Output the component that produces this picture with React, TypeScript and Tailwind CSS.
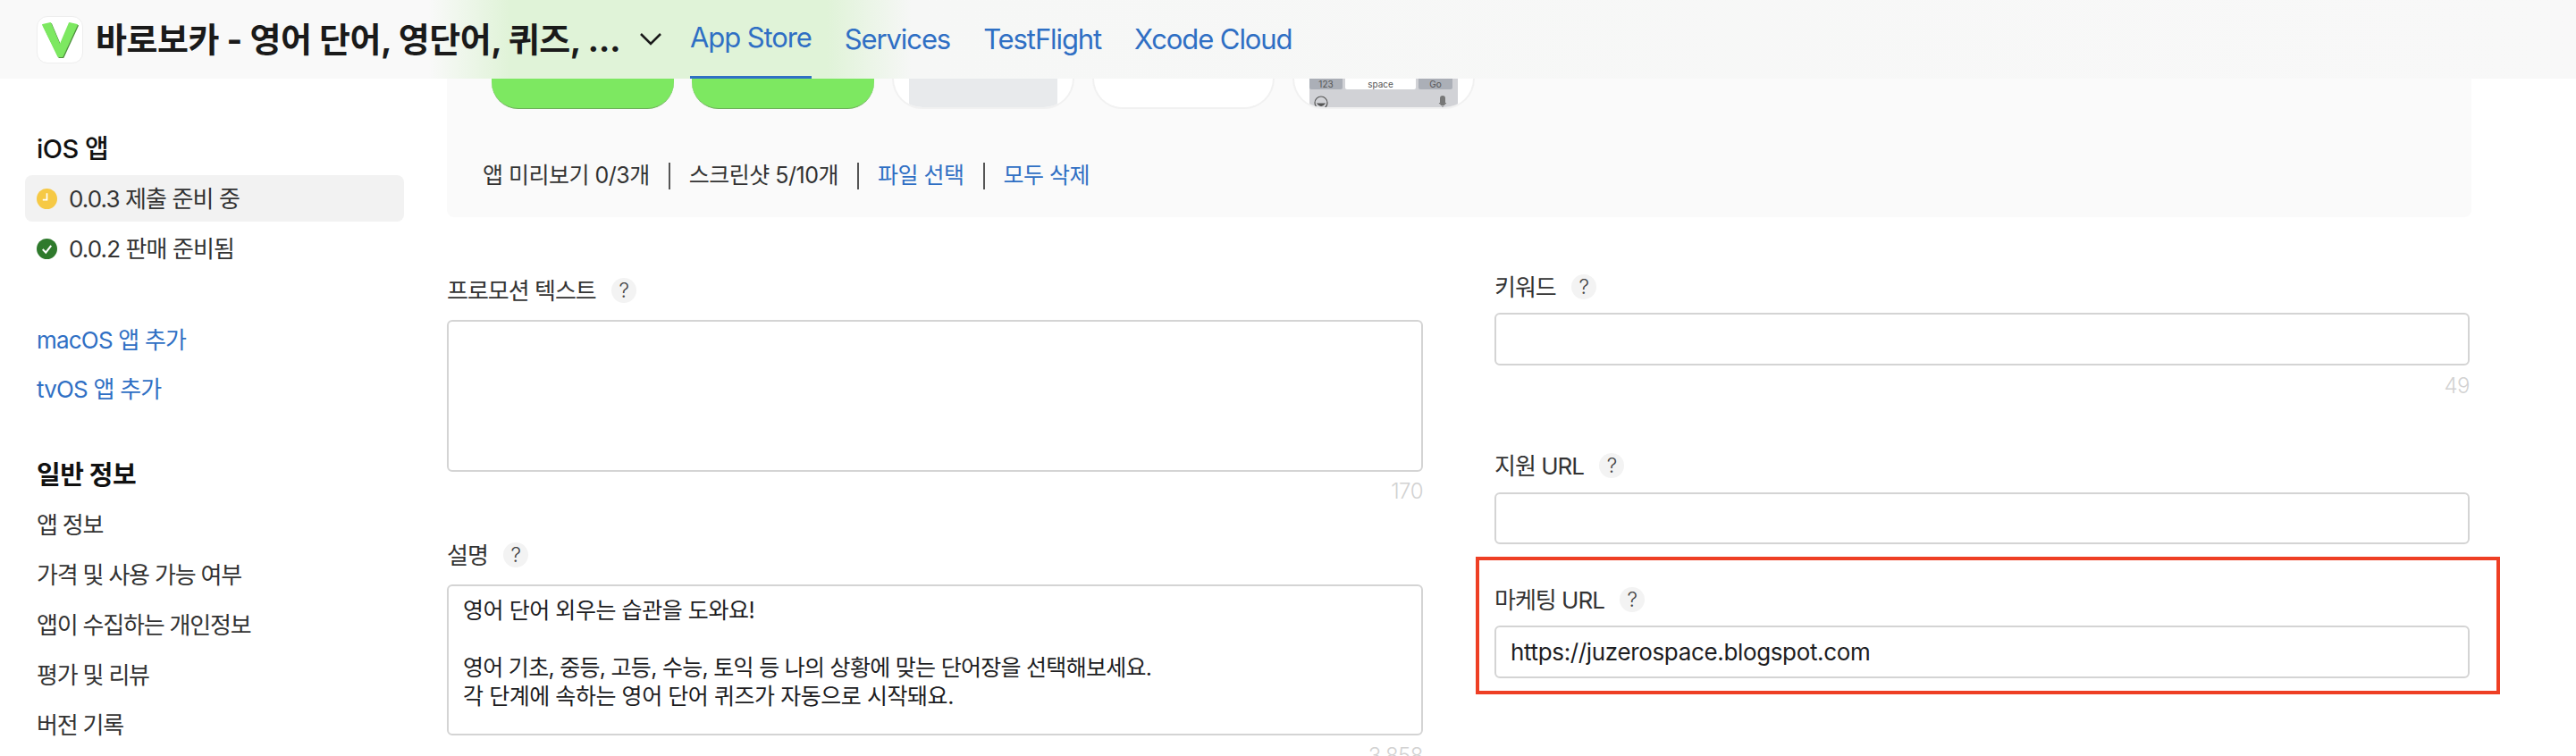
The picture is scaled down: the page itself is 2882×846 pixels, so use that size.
const font = "font-['Inter','Noto_Sans_CJK_KR',sans-serif]";

function Help() {
  return (
    <span className="flex h-[28px] w-[28px] items-center justify-center rounded-full bg-[#f3f3f3] text-[23px] font-light text-[#444]">
      ?
    </span>
  );
}

function FieldLabel({ text }: { text: string }) {
  return (
    <div className="flex h-[28px] items-center gap-[17px] text-[26px] tracking-[-1px] text-[#333]">
      <span>{text}</span>
      <Help />
    </div>
  );
}

function Box({ height, children }: { height: string; children?: React.ReactNode }) {
  return (
    <div className={`${height} rounded-[6px] border-2 border-[#d4d4d4] bg-white text-[#1d1d1f]`}>
      {children}
    </div>
  );
}

function Counter({ value }: { value: string }) {
  return <div className="h-[24px] text-right text-[24px] font-light leading-[24px] tracking-[-0.5px] text-[#d2d2d2]">{value}</div>;
}

function Screenshot({ inner, children }: { inner: string; children?: React.ReactNode }) {
  return (
    <div className="flex h-[34px] w-[204px] justify-center overflow-hidden rounded-b-[34px] border-x-2 border-b-2 border-[#f1f1f1] bg-white">
      <div className={`h-full w-[166px] ${inner}`}>{children}</div>
    </div>
  );
}

function SideLink({ text }: { text: string }) {
  return <div className="flex h-[56px] items-center pl-[41px] text-[26px] tracking-[-1.2px] text-[#333]">{text}</div>;
}

export default function App() {
  return (
    <div className={`flex h-[846px] w-[2882px] flex-col overflow-hidden bg-white ${font}`}>
      <header className="flex h-[88px] shrink-0 items-center bg-[linear-gradient(90deg,#f9f9f9_480px,#e0f3d8_570px,#e0f3d8_925px,#f6f7f6_1020px,#f8f8f8_2882px)] pl-[41px]">
        <div className="flex h-[53px] w-[52px] items-center justify-center rounded-[12px] border border-[#eeeeee] bg-white">
          <svg viewBox="0 0 52 53" className="h-[53px] w-[52px]">
            <polygon points="6,9 15,7 26,33 37,7 46,9 29,46 24,46" fill="#4f8f3e" stroke="#4f8f3e" strokeWidth="1.5" strokeLinejoin="round" transform="translate(1 1)" />
            <polygon points="6,9 15,7 26,33 37,7 46,9 29,46 24,46" fill="#7de861" stroke="#7de861" strokeWidth="1.5" strokeLinejoin="round" />
          </svg>
        </div>
        <h1 className="ml-[14px] w-[587px] whitespace-nowrap text-[38px] font-bold tracking-[-0.45px] text-[#1a1a1a]">
          바로보카 - 영어 단어, 영단어, 퀴즈, ...
        </h1>
        <svg viewBox="0 0 24 14" className="ml-[22px] h-[14px] w-[24px]" fill="none" stroke="#1a1a1a" strokeWidth="2.6">
          <path d="M1 1 L12 12 L23 1" />
        </svg>
        <nav className="ml-[32px] flex h-full gap-[37px] text-[31px] tracking-[-1.1px] text-[#2f6fc4]">
          <div className="flex h-full items-center border-b-[3px] border-[#2f6fc4] pb-[1px]">App Store</div>
          <div className="flex items-center">Services</div>
          <div className="flex items-center">TestFlight</div>
          <div className="flex items-center">Xcode Cloud</div>
        </nav>
      </header>

      <div className="flex min-h-0 flex-1">
        {/* Sidebar */}
        <aside className="w-[500px] shrink-0 pt-[62px]">
          <div className="flex h-[34px] items-center pl-[41px] text-[29px] font-medium tracking-[-0.5px] text-[#111]">iOS 앱</div>
          <div className="ml-[28px] mt-[12px] flex h-[52px] w-[424px] items-center gap-[13px] rounded-[8px] bg-[#f2f2f2] pl-[13px] text-[26px] tracking-[-0.9px] text-[#333]">
            <svg viewBox="0 0 22 22" className="h-[23px] w-[23px]">
              <circle cx="11" cy="11" r="11" fill="#f6c945" />
              <path d="M11 5 V12 H6.5" fill="none" stroke="#fff" strokeWidth="1.6" />
            </svg>
            <span>0.0.3 제출 준비 중</span>
          </div>
          <div className="ml-[28px] mt-[4px] flex h-[52px] items-center gap-[13px] pl-[13px] text-[26px] tracking-[-0.9px] text-[#333]">
            <svg viewBox="0 0 22 22" className="h-[23px] w-[23px]">
              <circle cx="11" cy="11" r="11" fill="#2f7a2c" />
              <path d="M6.5 11.5 L9.8 15 L15.5 7.5" fill="none" stroke="#fff" strokeWidth="2" />
            </svg>
            <span>0.0.2 판매 준비됨</span>
          </div>
          <div className="mt-[48px] text-[26px] tracking-[-0.8px] text-[#2f6fc4]">
            <div className="flex h-[56px] items-center pl-[41px]">macOS 앱 추가</div>
            <div className="flex h-[55px] items-center pl-[41px]">tvOS 앱 추가</div>
          </div>
          <div className="mt-[51px] flex h-[36px] items-center pl-[41px] text-[29px] font-bold tracking-[-0.5px] text-[#111]">일반 정보</div>
          <div className="mt-[9px]">
            <SideLink text="앱 정보" />
            <SideLink text="가격 및 사용 가능 여부" />
            <SideLink text="앱이 수집하는 개인정보" />
            <SideLink text="평가 및 리뷰" />
            <SideLink text="버전 기록" />
          </div>
        </aside>

        <main className="w-[2265px] shrink-0">
          {/* Media panel */}
          <section className="h-[155px] rounded-b-[8px] bg-[#fafafa]">
            <div className="flex gap-[20px] pl-[50px]">
              <div className="h-[34px] w-[204px] rounded-b-[30px] border-b border-[#6cae58] bg-[#7de861]" />
              <div className="h-[34px] w-[204px] rounded-b-[30px] border-b border-[#6cae58] bg-[#7de861]" />
              <Screenshot inner="bg-[#e8eaec]" />
              <Screenshot inner="bg-white" />
              <Screenshot inner="bg-[#d1d2d6]">
                <div className="flex h-[12px] gap-[3px] text-center text-[10px] leading-[12px] text-[#555]">
                  <div className="w-[37px] rounded-b-[2px] bg-[#abafb7]">123</div>
                  <div className="w-[79px] rounded-b-[2px] bg-white">space</div>
                  <div className="w-[38px] rounded-b-[2px] bg-[#abafb7]">Go</div>
                </div>
                <div className="mt-[7px] flex justify-between pl-[5px] pr-[12px]">
                  <svg viewBox="0 0 16 16" className="h-[16px] w-[16px]" fill="none" stroke="#555" strokeWidth="1.2">
                    <circle cx="8" cy="8" r="7" />
                    <path d="M4 9 H12 Q8 14 4 9 Z" fill="#555" />
                  </svg>
                  <svg viewBox="0 0 10 16" className="h-[16px] w-[10px]">
                    <rect x="2" y="0" width="6" height="11" rx="3" fill="#777" />
                    <path d="M1 8 Q5 14 9 8 M5 12 V16" fill="none" stroke="#777" strokeWidth="1" />
                  </svg>
                </div>
              </Screenshot>
            </div>
            <div className="mt-[60px] flex h-[30px] items-center pl-[40px] text-[25px] tracking-[-0.5px] text-[#333]">
              <span>앱 미리보기 0/3개</span>
              <span className="mx-[21px] h-[30px] w-[2px] bg-[#555]" />
              <span>스크린샷 5/10개</span>
              <span className="mx-[21px] h-[30px] w-[2px] bg-[#555]" />
              <span className="text-[#2f6fc4]">파일 선택</span>
              <span className="mx-[21px] h-[30px] w-[2px] bg-[#555]" />
              <span className="text-[#2f6fc4]">모두 삭제</span>
            </div>
          </section>

          <div className="flex gap-[80px]">
            {/* Left form column */}
            <div className="w-[1092px] shrink-0 pt-[68px]">
              <FieldLabel text="프로모션 텍스트" />
              <div className="mt-[19px]">
                <Box height="h-[170px]" />
              </div>
              <div className="mt-[10px]">
                <Counter value="170" />
              </div>
              <div className="mt-[45px]">
                <FieldLabel text="설명" />
              </div>
              <div className="mt-[19px]">
                <Box height="h-[169px]">
                  <div className="px-[16px] pt-[11px] text-[25px] leading-[32px] tracking-[-0.45px]">
                    <p>영어 단어 외우는 습관을 도와요!</p>
                    <p className="h-[32px]" />
                    <p className="tracking-[-0.72px]">영어 기초, 중등, 고등, 수능, 토익 등 나의 상황에 맞는 단어장을 선택해보세요.</p>
                    <p>각 단계에 속하는 영어 단어 퀴즈가 자동으로 시작돼요.</p>
                  </div>
                </Box>
              </div>
              <div className="mt-[11px]">
                <Counter value="3,858" />
              </div>
            </div>

            {/* Right form column */}
            <div className="w-[1091px] shrink-0 pt-[64px]">
              <FieldLabel text="키워드" />
              <div className="mt-[15px]">
                <Box height="h-[59px]" />
              </div>
              <div className="mt-[11px]">
                <Counter value="49" />
              </div>
              <div className="mt-[63px]">
                <FieldLabel text="지원 URL" />
              </div>
              <div className="mt-[16px]">
                <Box height="h-[58px]" />
              </div>
              <div className="-ml-[21px] -mr-[34px] mt-[14px] h-[154px] border-4 border-[#ee3f24] pl-[17px] pr-[30px] pt-[30px]">
                <FieldLabel text="마케팅 URL" />
                <div className="mt-[15px]">
                  <Box height="h-[59px]">
                    <div className="flex h-full items-center px-[16px] text-[26px] tracking-[-0.35px]">https://juzerospace.blogspot.com</div>
                  </Box>
                </div>
              </div>
            </div>
          </div>
        </main>
      </div>
    </div>
  );
}
